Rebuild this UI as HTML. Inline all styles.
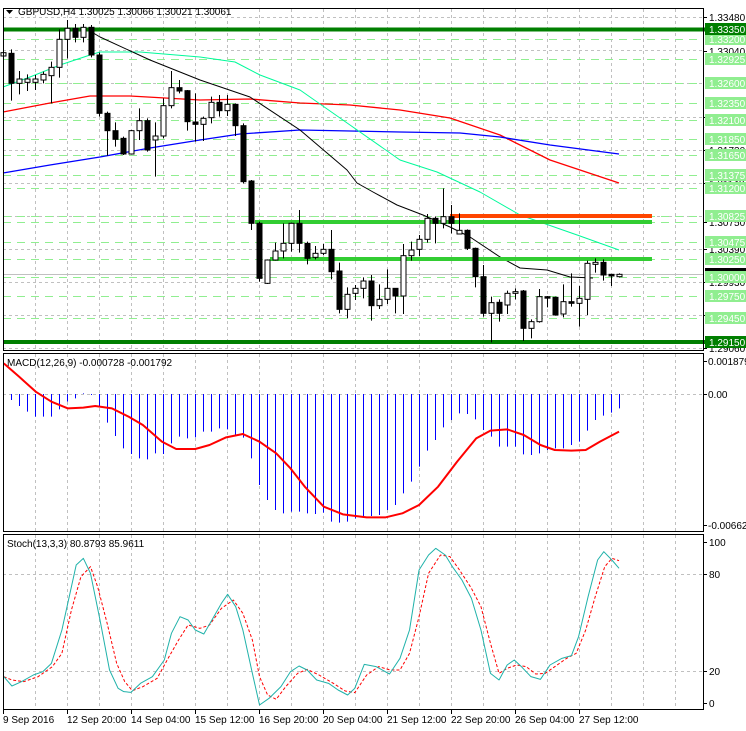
<!DOCTYPE html>
<html><head><meta charset="utf-8">
<style>
html,body{margin:0;padding:0;background:#fff;width:746px;height:731px;overflow:hidden}
svg{display:block}
text{font-family:"Liberation Sans",sans-serif;font-size:10px}
</style></head>
<body>
<svg id="s" width="746" height="731" viewBox="0 0 746 731" xmlns="http://www.w3.org/2000/svg">
<rect width="746" height="731" fill="#fff"/>
<g id="grid"></g>
<g id="main"></g>
<g id="macd"></g>
<g id="stoch"></g>
<g id="frame"></g>
<g id="labels"></g>
</svg>
<script>
var NS="http://www.w3.org/2000/svg";
function el(p,t,a,txt){var e=document.createElementNS(NS,t);for(var k in a)e.setAttribute(k,a[k]);if(txt!==undefined)e.textContent=txt;document.getElementById(p).appendChild(e);return e;}
function line(p,x1,y1,x2,y2,c,w,d){var a={x1:x1,y1:y1,x2:x2,y2:y2,stroke:c,'stroke-width':w||1};if(d)a['stroke-dasharray']=d;return el(p,'line',a);}
function poly(p,pts,c,w,d){var a={points:pts.map(function(q){return q[0]+','+q[1]}).join(' '),fill:'none',stroke:c,'stroke-width':w||1,'stroke-linejoin':'round'};if(d)a['stroke-dasharray']=d;return el(p,'polyline',a);}
var G='#c0c0c0',LG='#90ee90';
// vertical grid
for(var x=35.5;x<700;x+=32){
 line('grid',x,9,x,350,G,1,'3,3');line('grid',x,354,x,531,G,1,'3,3');line('grid',x,535,x,709,G,1,'3,3');
}
// main horizontal gray grid
[17,50,83,117,150,183,216,249,282,315,348].forEach(function(y){line('grid',3,y+.5,703,y+.5,G,1,'3,3');});
// light green levels
[39,59,83,103,120,139,155,175,188,216,222,242,259,277,296,318].forEach(function(y){line('grid',3,y+.5,703,y+.5,LG,1,'8,6');});
// macd zero, stoch 80/20
line('grid',3,394.5,703,394.5,G,1,'3,3');
line('grid',3,574.5,703,574.5,G,1,'3,3');line('grid',3,671.5,703,671.5,G,1,'3,3');
// bid line
line('main',3,274.5,703,274.5,'#c0c0c0',1);
// MAs
poly('main',[[3,112],[50,103],[90,96],[130,96],[200,100],[250,99],[300,103],[350,105],[400,110],[450,118],[500,135],[550,160],[619,183]],'#ff0000',1.3);
poly('main',[[3,173],[50,165],[100,157],[150,148],[200,140],[240,134],[300,130],[400,132],[460,133],[500,137],[550,145],[619,154]],'#0000ff',1.3);
poly('main',[[3,87],[30,77],[60,65],[90,55],[100,52],[140,52],[200,57],[235,62],[260,75],[300,90],[350,125],[400,160],[437,172],[480,192],[520,215],[580,236],[619,250]],'#00fa9a',1);
poly('main',[[3,31],[90,31],[100,37],[150,60],[200,80],[250,97],[300,130],[347,170],[357,183],[373,192],[397,205],[423,215],[450,227],[470,237],[500,257],[520,268],[547,270],[570,277],[593,278]],'#000',1);
// level lines
line('main',3,29.5,746,29.5,'#007f00',4);
line('main',3,342,746,342,'#007f00',4);
line('main',450,216,652,216,'#ff4500',4);
line('main',255,222,652,222,'#32cd32',4);
line('main',270,259,652,259,'#32cd32',4);
// candles
var A=[[128,138,80,165,1],[130,220,118,272,0],[207,220,183,253,1],[207,217,193,243,1],[207,217,195,240,1],[193,210,185,220,1],[172,197,155,280,1],[88,172,58,203,1],[55,88,30,145,1],[55,82,42,97,0],[52,82,42,97,1],[52,135,45,142,0],[135,310,128,320,0],[310,362,305,437,0],[362,388,337,410,0],[385,432,380,435,0],[362,432,360,432,1],[332,362,295,390,1],[332,420,325,425,0],[378,390,337,500,1],[287,378,265,385,1],[233,287,183,295,1],[233,243,210,250,0],[242,335,240,362,0],[336,343,250,395,0],[325,343,320,393,1],[277,323,260,340,1],[277,302,255,320,0],[283,302,255,318,1],[283,347,280,378,0],[347,515,340,520,0]];
var B=[[33,160,30,180,0],[160,325,155,335,0],[270,340,268,342,1],[243,270,218,272,1],[220,243,160,265,1],[160,220,158,245,1],[160,220,120,248,0],[220,265,215,283,0],[250,262,228,268,1],[238,250,222,255,1],[238,305,180,328,0],[303,418,278,430,0],[373,418,352,445,1],[355,370,345,390,1],[333,355,322,385,1],[333,407,315,452,0],[388,407,343,417,1],[355,388,298,402,1],[355,378,355,430,0],[257,378,222,432,1],[240,257,215,272,1],[208,238,195,258,1],[145,208,132,218,1],[145,160,140,220,0],[140,160,55,175,1],[140,160,105,190,0],[181,192,130,192,1],[181,235,178,240,0],[235,320,233,352,0],[320,430,285,440,0],[398,430,380,517,1],[397,430,388,455,0],[370,405,362,432,1],[365,370,355,388,1],[363,475,360,513,0],[455,475,448,505,1],[380,455,357,458,1],[380,383,378,412,0],[382,435,380,437,0],[395,432,343,442,1],[395,400,310,410,0],[385,400,348,470,1],[280,388,272,435,1],[277,283,265,308,1],[277,315,268,332,0],[313,318,312,348,0],[313,320,310,322,1]];
function candle(k,c,base){var x=3+8*k,f=function(v){return base+v/3};
 var t=f(c[0]),b=f(c[1]);if(b-t<1.5)b=t+1.5;
 line('main',x+.5,f(c[2]),x+.5,f(c[3]),'#000',1);
 el('main','rect',{x:x-2,y:t,width:5,height:b-t,fill:c[4]?'#fff':'#000',stroke:'#000','stroke-width':1});}
A.forEach(function(c,i){candle(i,c,10);});
B.forEach(function(c,i){candle(31+i,c,170);});
// MACD histogram
var H=[190,210,228,245,260,260,260,238,215,205,190,195,230,278,318,355,372,385,388,370,372,340,320,325,322,305,305,295,298,315,323,385,465,510,540,550,545,545,550,552,548,575,578,575,565,560,558,555,540,525,490,455,410,362,330,292,270,250,252,268,300,320,350,350,350,373,375,370,360,355,355,345,335,302,270,257,248,235];
H.forEach(function(v,k){var x=3+8*k+.5,y=330+v/3;line('macd',x,394,x,y,'#0000ff',1);});
var MS=[[8,100],[40,140],[75,185],[108,215],[142,235],[175,233],[200,228],[235,235],[270,260],[300,285],[340,335],[370,357],[410,357],[440,345],[475,322],[510,312],[545,335],[580,370],[610,415],[640,470],[680,530],[720,553],[770,562],[810,562],[845,550],[880,525],[920,470],[960,395],[1000,325],[1030,302],[1065,298],[1100,315],[1135,345],[1165,360],[1200,362],[1230,360],[1260,335],[1300,305]];
poly('macd',MS.map(function(p){return [p[0]/2.1,330+p[1]/3]}),'#ff0000',2);
// stoch
var S1=[[8,440],[25,468],[45,455],[70,435],[90,425],[108,400],[130,300],[160,105],[175,85],[190,130],[210,270],[230,420],[248,475],[260,485],[275,487],[295,460],[320,440],[345,390],[360,310],[378,260],[395,270],[410,300],[428,312],[445,270],[465,220],[478,193],[495,230],[510,300],[530,430],[545,525],[565,505],[590,470],[610,425],[628,408],[645,420],[665,450],[690,460],[710,480],[730,495],[745,475],[765,403],[790,410],[818,432],[840,385],[860,300],[880,120],[900,75],[915,55],[935,75],[950,110],[970,150],[990,205],[1010,300],[1030,430],[1048,450],[1065,405],[1080,390],[1095,410],[1115,440],[1135,448],[1155,405],[1180,385],[1200,377],[1215,320],[1235,200],[1255,90],[1268,65],[1285,90],[1300,115]];
var S2=[[8,440],[25,450],[50,455],[80,440],[110,410],[130,370],[150,240],[170,140],[190,110],[205,170],[225,280],[245,400],[262,455],[278,482],[300,470],[330,445],[355,380],[375,330],[395,285],[420,295],[440,285],[465,235],[490,210],[510,250],[530,330],[545,440],[562,495],[580,508],[600,470],[625,430],[645,418],[670,435],[700,460],[725,483],[745,488],[770,435],[795,410],[820,420],[840,420],[860,370],[880,260],[900,130],[925,75],[945,80],[965,120],[990,175],[1010,230],[1030,340],[1048,430],[1065,415],[1085,405],[1105,410],[1125,432],[1145,430],[1165,410],[1190,385],[1210,370],[1230,300],[1250,200],[1270,110],[1285,85],[1300,92]];
poly('stoch',S2.map(function(p){return [p[0]/2.1,530+p[1]/3]}),'#ff0000',1,'3,2');
poly('stoch',S1.map(function(p){return [p[0]/2.1,530+p[1]/3]}),'#20b2aa',1);
// frames
el('frame','rect',{x:3.5,y:8.5,width:700,height:342,fill:'none',stroke:'#000'});
el('frame','rect',{x:3.5,y:353.5,width:700,height:178,fill:'none',stroke:'#000'});
el('frame','rect',{x:3.5,y:534.5,width:700,height:175,fill:'none',stroke:'#000'});
// title
el('frame','path',{d:'M6 10 L13 10 L9.5 14 Z',fill:'#000'});
el('frame','text',{x:18,y:15},'GBPUSD,H4  1.30025 1.30066 1.30021 1.30061');
el('frame','text',{x:7,y:366},'MACD(12,26,9) -0.000728 -0.001792');
el('frame','text',{x:7,y:547},'Stoch(13,3,3) 80.8793 85.9611');
// right labels black
[[17,'1.33480'],[51,'1.33040'],[117,'1.32180'],[150,'1.31730'],[183,'1.31140'],[222,'1.30750'],[249,'1.30390'],[282,'1.29930'],[315,'1.29530'],[348,'1.29060']].forEach(function(a){
 line('labels',703,a[0]+.5,707,a[0]+.5,'#000',1);
 el('labels','text',{x:709,y:a[0]+4},a[1]);});
el('labels','rect',{x:705,y:268,width:41,height:5,fill:'#000'});
[[39,'1.33200'],[59,'1.32925'],[83,'1.32600'],[103,'1.32350'],[120,'1.32100'],[139,'1.31850'],[155,'1.31650'],[175,'1.31375'],[188,'1.31200'],[216,'1.30825'],[242,'1.30475'],[259,'1.30250'],[277,'1.30000'],[296,'1.29750'],[318,'1.29450']].forEach(function(a){
 el('labels','rect',{x:705,y:a[0]-6,width:41,height:12,fill:LG});
 el('labels','text',{x:709,y:a[0]+4,fill:'#fff'},a[1]);});
[[29,'1.33350'],[342,'1.29150']].forEach(function(a){
 el('labels','rect',{x:705,y:a[0]-6,width:41,height:12,fill:'#007f00'});
 el('labels','text',{x:709,y:a[0]+4,fill:'#fff'},a[1]);});
// macd / stoch labels
[[361,'0.001879'],[394,'0.00'],[525,'-0.006625']].forEach(function(a){line('labels',703,a[0]+.5,707,a[0]+.5,'#000');el('labels','text',{x:708,y:a[0]+4},a[1]);});
[[542,'100'],[574,'80'],[671,'20'],[703,'0']].forEach(function(a){line('labels',703,a[0]+.5,707,a[0]+.5,'#000');el('labels','text',{x:709,y:a[0]+4},a[1]);});
// time axis
['9 Sep 2016','12 Sep 20:00','14 Sep 04:00','15 Sep 12:00','16 Sep 20:00','20 Sep 04:00','21 Sep 12:00','22 Sep 20:00','26 Sep 04:00','27 Sep 12:00'].forEach(function(t,i){
 var x=3+64*i;line('labels',x+.5,710,x+.5,714,'#000');el('labels','text',{x:x+(i?0:0),y:723},t);});
</script>
</body></html>
